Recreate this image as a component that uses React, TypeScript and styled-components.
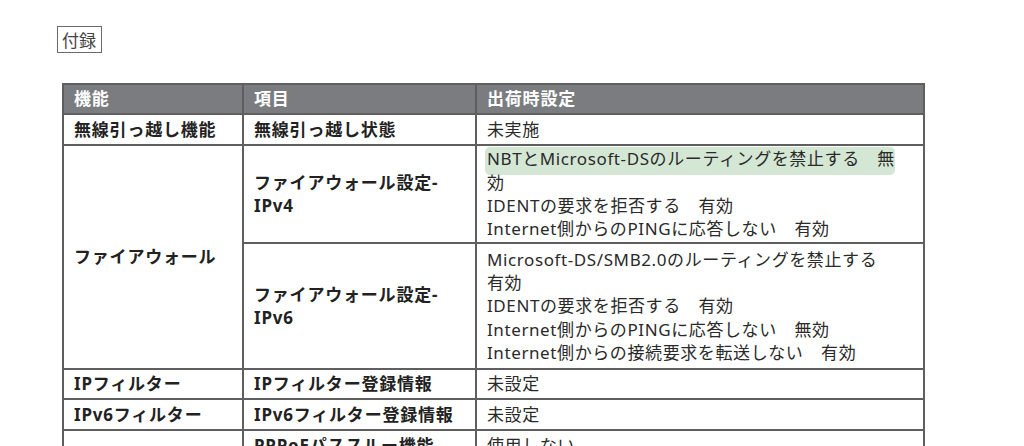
import React from 'react';
import styled, { createGlobalStyle } from 'styled-components';

const GlobalStyle = createGlobalStyle`
  html, body {
    margin: 0;
    padding: 0;
    background: #ffffff;
  }
  body {
    font-family: 'Noto Sans', 'Noto Sans CJK JP', sans-serif;
    color: #222222;
    overflow: hidden;
  }
`;

type Row = {
  feature?: { text: string; span: number };
  item: string[];
  values: string[];
  height: number;
  highlight?: boolean;
};

const rows: Row[] = [
  {
    feature: { text: '無線引っ越し機能', span: 1 },
    item: ['無線引っ越し状態'],
    values: ['未実施'],
    height: 31,
  },
  {
    feature: { text: 'ファイアウォール', span: 2 },
    item: ['ファイアウォール設定-', 'IPv4'],
    values: [
      'NBTとMicrosoft-DSのルーティングを禁止する　無',
      '効',
      'IDENTの要求を拒否する　有効',
      'Internet側からのPINGに応答しない　有効',
    ],
    height: 98,
    highlight: true,
  },
  {
    item: ['ファイアウォール設定-', 'IPv6'],
    values: [
      'Microsoft-DS/SMB2.0のルーティングを禁止する',
      '有効',
      'IDENTの要求を拒否する　有効',
      'Internet側からのPINGに応答しない　無効',
      'Internet側からの接続要求を転送しない　有効',
    ],
    height: 126,
  },
  {
    feature: { text: 'IPフィルター', span: 1 },
    item: ['IPフィルター登録情報'],
    values: ['未設定'],
    height: 30,
  },
  {
    feature: { text: 'IPv6フィルター', span: 1 },
    item: ['IPv6フィルター登録情報'],
    values: ['未設定'],
    height: 31,
  },
  {
    feature: { text: '', span: 1 },
    item: ['PPPoEパススルー機能'],
    values: ['使用しない'],
    height: 31,
  },
];

export default function App() {
  return (
    <Page>
      <GlobalStyle />
      <Tag>付録</Tag>
      <Table>
        <colgroup>
          <col style={{ width: 180 }} />
          <col style={{ width: 233 }} />
          <col style={{ width: 448 }} />
        </colgroup>
        <thead>
          <BodyRow $h={30}>
            <HeadCell>機能</HeadCell>
            <HeadCell>項目</HeadCell>
            <HeadCell>出荷時設定</HeadCell>
          </BodyRow>
        </thead>
        <tbody>
          {rows.map((row, i) => (
            <BodyRow key={i} $h={row.height}>
              {row.feature && (
                <Cell $bold rowSpan={row.feature.span}>
                  {row.feature.text}
                </Cell>
              )}
              <Cell $bold>
                {row.item.map((t) => (
                  <Line key={t}>{t}</Line>
                ))}
              </Cell>
              <ValueCell>
                {row.highlight && <Highlight />}
                {row.values.map((t) => (
                  <Line key={t}>{t}</Line>
                ))}
              </ValueCell>
            </BodyRow>
          ))}
        </tbody>
      </Table>
    </Page>
  );
}

const Page = styled.div`
  width: 1024px;
  height: 446px;
  padding: 26px 0 0 62px;
  box-sizing: border-box;
`;

const Tag = styled.div`
  width: fit-content;
  margin-left: -5px;
  padding: 1px 5px 1px 4px;
  border: 1px solid #6a6a6a;
  font-family: 'Noto Sans CJK JP', sans-serif;
  font-size: 17px;
  line-height: 23px;
  color: #444444;
`;

const Table = styled.table`
  margin-top: 30px;
  width: 861px;
  table-layout: fixed;
  border-collapse: collapse;
  border: 2px solid #5f5f5f;
  font-size: 17px;
`;

const BodyRow = styled.tr<{ $h: number }>`
  height: ${(p) => p.$h}px;
`;

const HeadCell = styled.th`
  padding: 0 10px;
  background: #7b7c80;
  color: #ffffff;
  border: 2px solid #5f5f5f;
  font-weight: 700;
  letter-spacing: 0.8px;
  text-align: left;
  line-height: 24px;
`;

const Cell = styled.td<{ $bold?: boolean }>`
  padding: 0 10px;
  border: 2px solid #5f5f5f;
  font-weight: ${(p) => (p.$bold ? 700 : 400)};
  letter-spacing: ${(p) => (p.$bold ? '0.8px' : '0.6px')};
  vertical-align: middle;
  line-height: 23.3px;
`;

const ValueCell = styled(Cell)`
  position: relative;
  color: #2a2a2a;
`;

const Line = styled.div`
  white-space: nowrap;
  position: relative;
`;

const Highlight = styled.span`
  position: absolute;
  left: 8px;
  top: 1px;
  width: 410px;
  height: 28px;
  border-radius: 5px;
  background: #d4e7d4;
`;
